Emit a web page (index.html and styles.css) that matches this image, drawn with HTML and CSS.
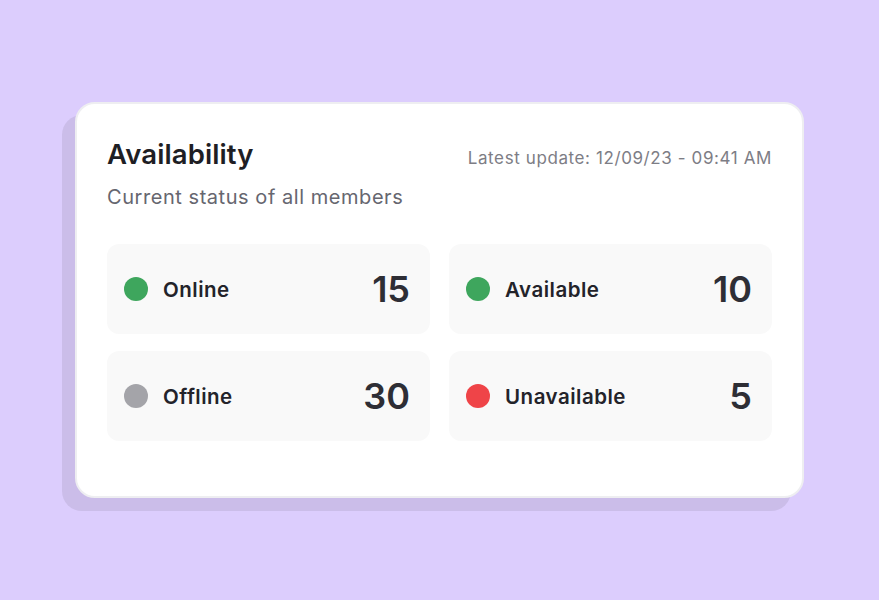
FILE: index.html
```html
<!DOCTYPE html>
<html>
<head>
<meta charset="utf-8">
<link rel="stylesheet" href="styles.css">
</head>
<body>
<div class="stage">
  <div class="card">
    <div class="head">
      <h1 class="title">Availability</h1>
      <div class="updated">Latest update: 12/09/23 - 09:41 AM</div>
    </div>
    <p class="sub">Current status of all members</p>
    <div class="grid">
      <div class="tile"><span class="dot green"></span><span class="label">Online</span><span class="num">15</span></div>
      <div class="tile"><span class="dot green"></span><span class="label">Available</span><span class="num">10</span></div>
      <div class="tile"><span class="dot gray"></span><span class="label">Offline</span><span class="num">30</span></div>
      <div class="tile"><span class="dot red"></span><span class="label">Unavailable</span><span class="num">5</span></div>
    </div>
  </div>
</div>
</body>
</html>
```
FILE: styles.css
```css
* { box-sizing: border-box; }
html, body { margin: 0; padding: 0; }
body {
  width: 879px;
  height: 600px;
  background: #dccdfd;
  font-family: Inter, "Noto Sans", sans-serif;
  overflow: hidden;
}
.stage {
  padding: 102px 75px 0 75px;
}
.card {
  width: 729px;
  height: 396px;
  background: #ffffff;
  border: 2px solid #eeeef1;
  border-radius: 20px;
  box-shadow: -13px 13px 0 #cbbde9;
  padding: 30px 30px 0 30px;
}
.head {
  display: flex;
  justify-content: space-between;
  align-items: baseline;
  padding-top: 4px;
}
.title {
  margin: 0;
  font-size: 27.5px;
  font-weight: 600;
  color: #1e1e24;
  letter-spacing: 0.1px;
  line-height: 32px;
}
.updated {
  font-size: 17px;
  letter-spacing: 0.6px;
  color: #7d7d85;
}
.sub {
  margin: 15px 0 0 0;
  font-size: 20px;
  letter-spacing: 0.55px;
  color: #66666f;
  line-height: 24px;
}
.grid {
  margin-top: 35px;
  display: grid;
  grid-template-columns: 1fr 1fr;
  column-gap: 19px;
  row-gap: 17px;
}
.tile {
  height: 90px;
  background: #f9f9f9;
  border-radius: 12px;
  display: flex;
  align-items: center;
  padding: 0 20px 0 17px;
}
.dot {
  width: 24px;
  height: 24px;
  border-radius: 50%;
  flex: none;
}
.green { background: #3ea65d; }
.gray { background: #a4a4a9; }
.red { background: #ef4448; }
.label {
  margin-left: 15px;
  font-size: 20.5px;
  letter-spacing: 0.5px;
  font-weight: 600;
  color: #23232a;
  flex: 1;
}
.num {
  font-size: 36px;
  font-weight: 600;
  color: #2e2e35;
}
```
